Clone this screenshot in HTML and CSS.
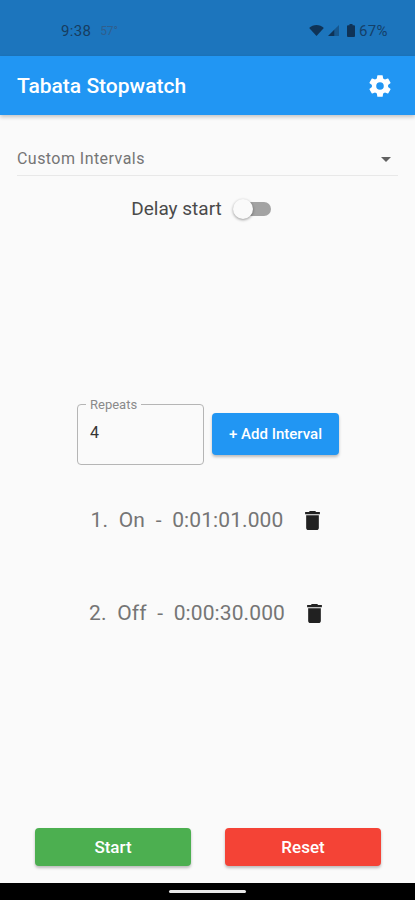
FILE: index.html
```html
<!DOCTYPE html>
<html lang="en">

<head>
    <meta charset="UTF-8">
    <title>Tabata Stopwatch</title>
    <link rel="stylesheet" href="styles.css">
</head>

<body>
    <div class="status_bar">
        <div class="status_left">
            <span class="clock">9:38</span>
            <span class="temp">57°</span>
        </div>
        <div class="status_right">
            <svg class="wifi" viewBox="0 0 16 12"><path d="M0 3.200C2 1.200 5 0 8 0s6 1.200 8 3.200L8 12z"/></svg>
            <svg class="signal" viewBox="0 0 12 12"><path d="M7 5v7H0z"/><path d="M12 0v12H7V5z" opacity=".45"/></svg>
            <svg class="battery" viewBox="0 0 8 13"><path d="M2.500 0h3v1.200H7a1 1 0 0 1 1 1V12a1 1 0 0 1-1 1H1a1 1 0 0 1-1-1V2.200a1 1 0 0 1 1-1h1.500z"/></svg>
            <span class="percent">67%</span>
        </div>
    </div>

    <header class="app_bar">
        <h1>Tabata Stopwatch</h1>
        <svg class="gear" viewBox="0 0 24 24"><path d="M19.430 12.980c.04-.32.07-.64.07-.98s-.03-.66-.07-.98l2.110-1.650c.19-.15.24-.42.12-.64l-2-3.460c-.12-.22-.39-.3-.61-.22l-2.490 1c-.52-.4-1.080-.73-1.690-.98l-.38-2.650A.49.49 0 0 0 14 2h-4c-.25 0-.46.18-.49.42l-.38 2.650c-.61.25-1.170.59-1.690.98l-2.490-1c-.23-.09-.49 0-.61.22l-2 3.460c-.13.22-.07.49.12.64l2.110 1.650c-.04.32-.07.65-.07.98s.03.66.07.98l-2.110 1.650c-.19.15-.24.42-.12.64l2 3.460c.12.22.39.3.61.22l2.490-1c.52.4 1.080.73 1.690.98l.38 2.650c.03.24.24.42.49.42h4c.25 0 .46-.18.49-.42l.38-2.650c.61-.25 1.170-.59 1.690-.98l2.490 1c.23.09.49 0 .61-.22l2-3.460c.12-.22.07-.49-.12-.64zM12 15.500A3.500 3.500 0 1 1 12 8.500a3.500 3.500 0 0 1 0 7z"/></svg>
    </header>

    <main class="content">
        <div class="dropdown">
            <span>Custom Intervals</span>
            <span class="caret"></span>
        </div>

        <div class="delay_row">
            <span>Delay start</span>
            <div class="switch">
                <div class="knob"></div>
            </div>
        </div>

        <div class="repeat_row">
            <div class="repeats">
                <span class="repeats_label">Repeats</span>
                <span>4</span>
            </div>
            <button type="button" class="add">+ Add Interval</button>
        </div>

        <div class="interval first">
            <span class="interval_text">1.&nbsp; On&nbsp; -&nbsp; 0:01:01.000</span>
            <svg class="trash" viewBox="0 0 14 18"><path d="M1 16c0 1.100.9 2 2 2h8c1.100 0 2-.9 2-2V4H1zM14 1h-3.500l-1-1h-5l-1 1H0v2h14z"/></svg>
        </div>
        <div class="interval">
            <span class="interval_text">2.&nbsp; Off&nbsp; -&nbsp; 0:00:30.000</span>
            <svg class="trash" viewBox="0 0 14 18"><path d="M1 16c0 1.100.9 2 2 2h8c1.100 0 2-.9 2-2V4H1zM14 1h-3.500l-1-1h-5l-1 1H0v2h14z"/></svg>
        </div>

        <div class="actions">
            <button type="button" class="action start">Start</button>
            <button type="button" class="action reset">Reset</button>
        </div>
    </main>

    <div class="nav_bar">
        <div class="home_pill"></div>
    </div>
</body>

</html>
```

FILE: styles.css
```css
html,
body {
    height: 100%;
}

body {
    margin: 0;
    display: flex;
    flex-direction: column;
    height: 900px;
    overflow: hidden;
    background-color: #fafafa;
    font-family: Roboto, sans-serif;
}

.status_bar {
    height: 56px;
    flex-shrink: 0;
    display: flex;
    justify-content: space-between;
    align-items: center;
    box-sizing: border-box;
    padding: 5px 27px 0 61px;
    background-color: #1c75bd;
    color: #14406a;
    font-size: 15px;
}

.status_left,
.status_right {
    display: flex;
    align-items: center;
}

.clock {
    letter-spacing: .3px;
    color: #173d61;
}

.temp {
    margin-left: 9px;
    font-size: 12px;
    color: #2f5f8e;
}

.status_right svg {
    fill: #0f3357;
}

.wifi {
    width: 15px;
    height: 11px;
}

.signal {
    width: 11px;
    height: 11px;
    margin-left: 4px;
}

.battery {
    width: 8px;
    height: 13px;
    margin-left: 8px;
}

.percent {
    margin-left: 4px;
    letter-spacing: .4px;
}

.app_bar {
    height: 59px;
    flex-shrink: 0;
    display: flex;
    justify-content: space-between;
    align-items: center;
    box-sizing: border-box;
    padding: 1px 22px 0 17px;
    background-color: #2196f3;
    box-shadow: 0 2px 4px rgba(0, 0, 0, .22);
}

h1 {
    margin: 0;
    font-size: 21px;
    font-weight: 500;
    color: white;
}

.gear {
    width: 26px;
    height: 26px;
    fill: white;
}

.content {
    flex: 1;
    display: flex;
    flex-direction: column;
    min-height: 0;
}

.dropdown {
    height: 61px;
    margin: 0 17px;
    padding: 0 7px 7px 0;
    box-sizing: border-box;
    display: flex;
    justify-content: space-between;
    align-items: flex-end;
    border-bottom: 1px solid #e8e8e8;
    font-size: 16px;
    letter-spacing: .45px;
    color: #757575;
}

.caret {
    width: 0;
    height: 0;
    margin-bottom: 6px;
    border-left: 5px solid transparent;
    border-right: 5px solid transparent;
    border-top: 5px solid #616161;
}

.delay_row {
    display: flex;
    justify-content: center;
    align-items: center;
    gap: 13px;
    margin-top: 21px;
    padding-right: 13px;
    font-size: 19px;
    color: #4a4a4a;
}

.switch {
    position: relative;
    width: 36px;
    height: 14px;
    border-radius: 7px;
    background-color: #a3a3a3;
}

.knob {
    position: absolute;
    left: -2px;
    top: -3px;
    width: 20px;
    height: 20px;
    border-radius: 50%;
    background-color: #fafafa;
    box-shadow: 0 1px 3px rgba(0, 0, 0, .4);
}

.repeat_row {
    display: flex;
    align-items: center;
    gap: 8px;
    margin-top: 184px;
    padding-left: 77px;
}

.repeats {
    position: relative;
    width: 127px;
    height: 61px;
    box-sizing: border-box;
    padding: 18px 12px 0;
    border: 1.500px solid #b5b5b5;
    border-radius: 4px;
    font-size: 16px;
    color: #333;
}

.repeats_label {
    position: absolute;
    top: -7px;
    left: 8px;
    padding: 0 4px;
    background-color: #fafafa;
    font-size: 13px;
    line-height: 13px;
    color: #8a8a8a;
}

.add {
    width: 127px;
    height: 42px;
    margin-bottom: 2px;
    padding: 0;
    border: 0;
    border-radius: 4px;
    background-color: #2196f3;
    box-shadow: 0 2px 3px rgba(0, 0, 0, .25);
    font-family: inherit;
    font-size: 15px;
    font-weight: 500;
    color: white;
}

.interval {
    height: 40px;
    margin-top: 53px;
    display: flex;
    justify-content: center;
    align-items: center;
    gap: 22px;
    padding-right: 4px;
    font-size: 21px;
    letter-spacing: .1px;
    color: #757575;
}

.interval.first {
    margin-top: 35px;
}

.trash {
    width: 15px;
    height: 19px;
    fill: #212121;
}

.actions {
    margin-top: auto;
    margin-bottom: 17px;
    display: flex;
    gap: 34px;
    padding-left: 35px;
}

.action {
    width: 156px;
    height: 38px;
    padding: 0;
    border: 0;
    border-radius: 4px;
    box-shadow: 0 2px 3px rgba(0, 0, 0, .25);
    font-family: inherit;
    font-size: 17px;
    font-weight: 500;
    color: white;
}

.start {
    background-color: #4caf50;
}

.reset {
    background-color: #f44336;
}

.nav_bar {
    height: 17px;
    flex-shrink: 0;
    display: flex;
    justify-content: center;
    align-items: center;
    background-color: black;
}

.home_pill {
    width: 77px;
    height: 3px;
    border-radius: 2px;
    background-color: #e8e8e8;
}
```
